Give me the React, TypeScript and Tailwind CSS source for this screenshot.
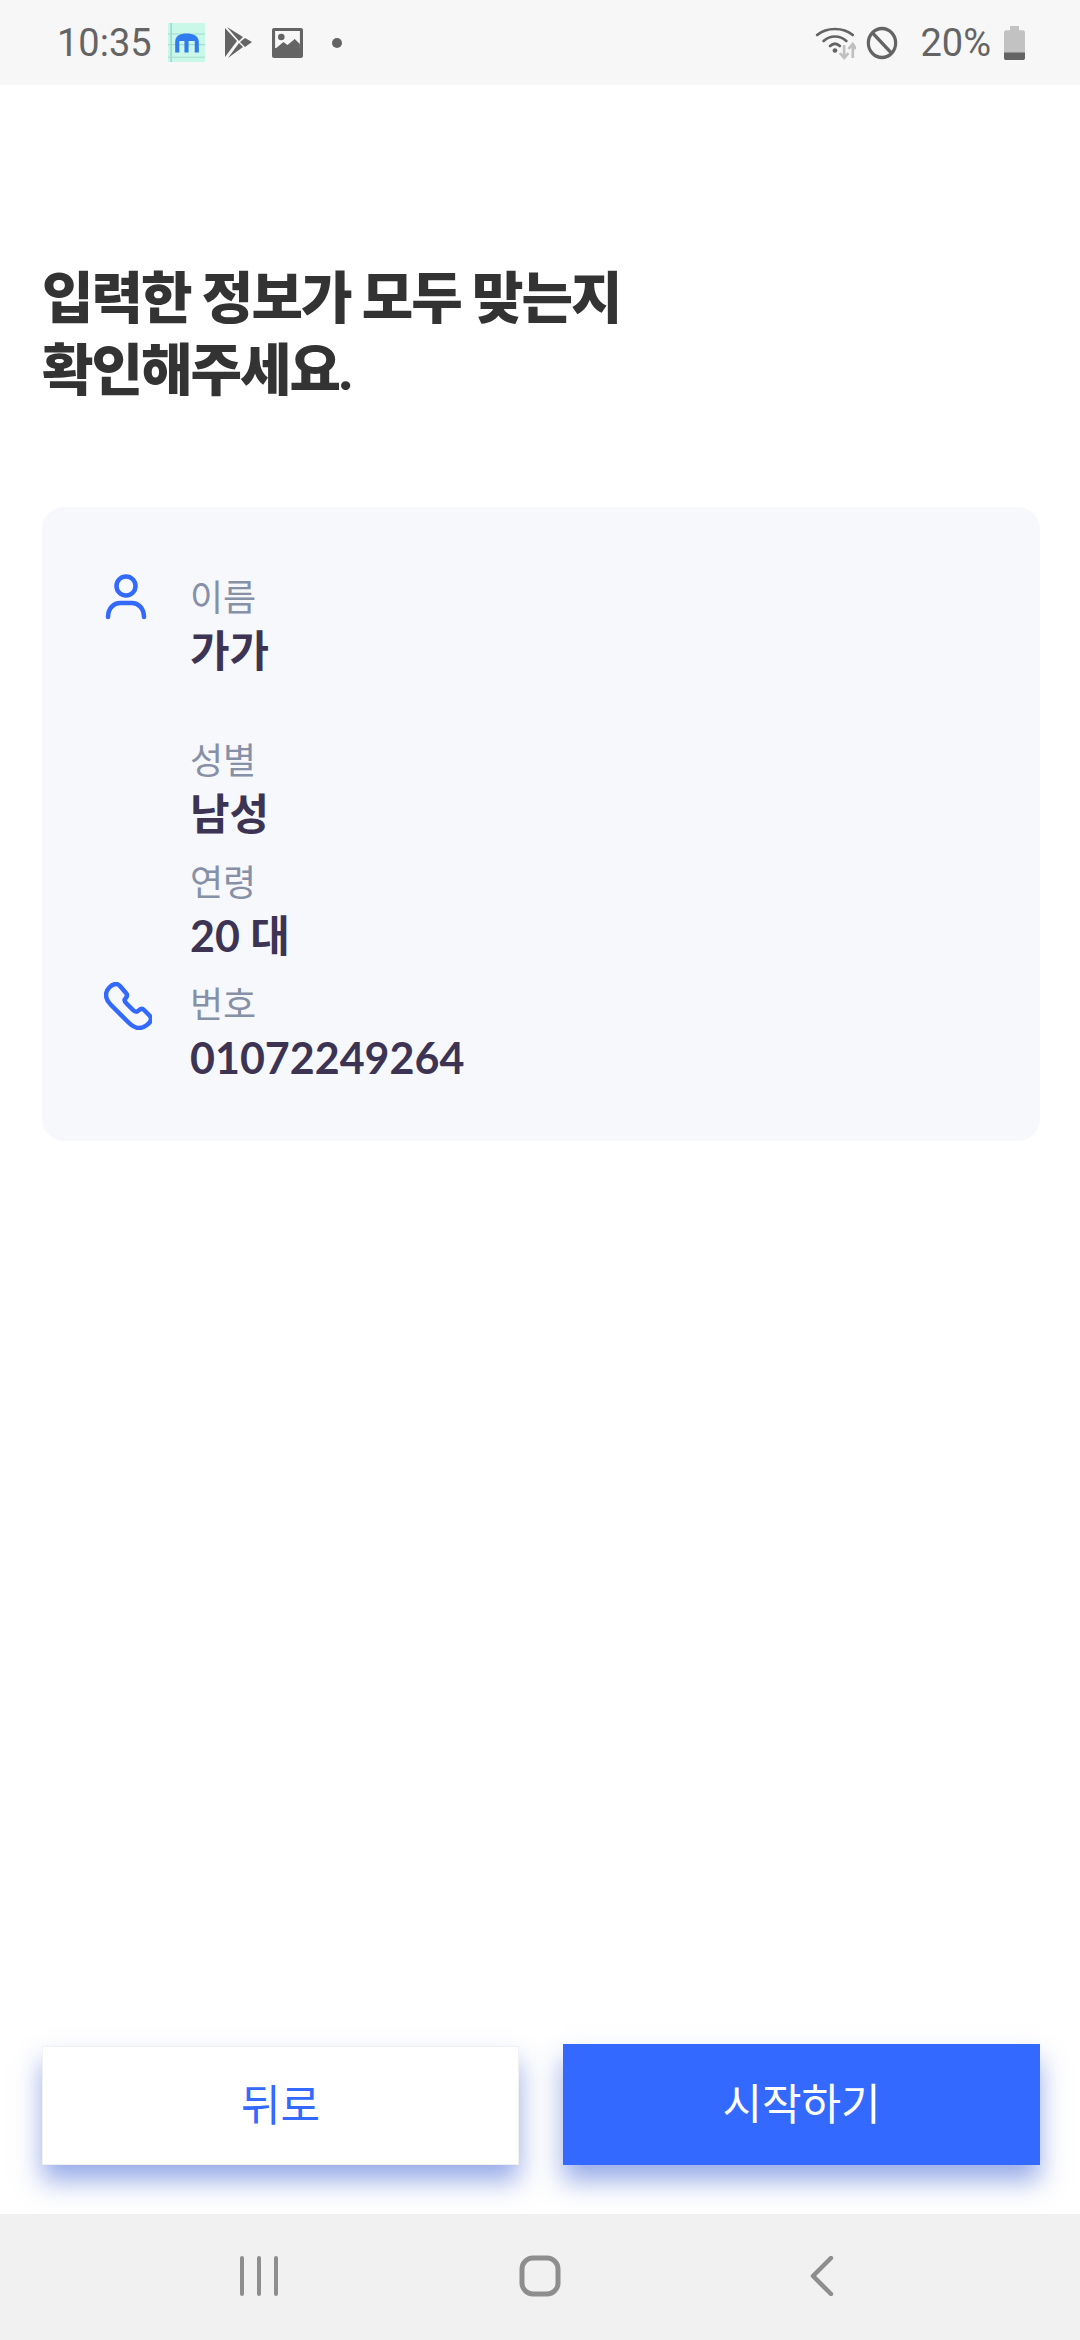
import React from "react";

const sans = "font-['Lato','Noto_Sans_CJK_KR',sans-serif]";

const StatusBar = () => (
  <div className="flex h-[85px] items-center justify-between bg-[#f7f7f7] pl-[57px] pr-[55px] text-[#646464]">
    <div className="flex items-center">
      <span className="font-['Roboto',sans-serif] text-[38px] leading-none">10:35</span>
      <svg width="37" height="39" viewBox="0 0 36 37" preserveAspectRatio="none" className="ml-[16px]">
        <rect width="36" height="37" fill="#c9f7e8" />
        <path d="M3 0V37" stroke="#7fc7cf" strokeWidth="1" />
        <path d="M0 10.5H36M0 20.5H36M0 32.5H36" stroke="#a5dccb" strokeWidth="1" />
        <path d="M7 28V18C7 12 12 10 18 10C24 10 30 12 30 18V28H26V17H20V28H16V17H11V28Z" fill="#2f7bf0" />
      </svg>
      <svg width="28" height="32" viewBox="0 0 28 32" className="ml-[19px]">
        <path d="M1 1L13 14L1 30Z M3 0L19 10L15 14Z M4 31L19 20L15 16Z M21 11L28 15L21 20L16 15Z" fill="#646464" />
      </svg>
      <svg width="31" height="30" viewBox="0 0 30 30" preserveAspectRatio="none" className="ml-[20px]">
        <rect width="30" height="30" rx="2" fill="#646464" />
        <rect x="3" y="3" width="24" height="17" fill="#f7f7f7" />
        <circle cx="9" cy="9" r="3.2" fill="#646464" />
        <path d="M3 21L11 14L15 17L22 11L27 16V24H3Z" fill="#646464" />
      </svg>
      <span className="ml-[29px] h-[10px] w-[10px] rounded-full bg-[#646464]" />
    </div>
    <div className="flex items-center">
      <svg width="41" height="34" viewBox="0 0 38 34" preserveAspectRatio="none">
        <path d="M2 9C11 1 26 1 35 9M8 15C14 9 23 9 29 15M14 20C17 17 20 17 23 20" fill="none" stroke="#646464" strokeWidth="2.6" strokeLinecap="round" />
        <circle cx="18.500" cy="24.500" r="2.200" fill="#646464" />
        <path d="M27 19V31M23 27L27 32L31 27" fill="none" stroke="#c0c0c0" strokeWidth="2.500" />
        <path d="M35 32V19M31 23L35 18L38 23" fill="none" stroke="#c0c0c0" strokeWidth="2.500" />
      </svg>
      <svg width="32" height="34" viewBox="0 0 34 34" preserveAspectRatio="none" className="ml-[10px]">
        <circle cx="17" cy="17" r="14.500" fill="none" stroke="#646464" strokeWidth="3.400" />
        <path d="M7 7L27 27" stroke="#646464" strokeWidth="3.400" />
      </svg>
      <span className="ml-[22px] font-['Roboto',sans-serif] text-[38px] leading-none">20%</span>
      <svg width="21" height="34" viewBox="0 0 21 32" preserveAspectRatio="none" className="ml-[13px]">
        <path d="M6 0H15V4H19C20 4 21 5 21 6V30C21 31 20 32 19 32H2C1 32 0 31 0 30V6C0 5 1 4 2 4H6Z" fill="#c2c2c2" />
        <path d="M0 25H21V30C21 31 20 32 19 32H2C1 32 0 31 0 30Z" fill="#646464" />
      </svg>
    </div>
  </div>
);

const Field = ({ label, value, icon, className = "" }: { label: string; value: string; icon?: React.ReactNode; className?: string }) => (
  <div className={`flex h-[122px] ${className}`}>
    <div className="flex w-[148px] justify-end pr-[43px] pt-[5px]">{icon}</div>
    <div className="flex flex-col">
      <span className="text-[36px] leading-[56px] text-[#8690a6]">{label}</span>
      <span className="text-[43px] font-bold leading-[52px] text-[#3d3454]">{value}</span>
    </div>
  </div>
);

const UserIcon = () => (
  <svg width="42" height="46" viewBox="0 0 42 46" fill="none" stroke="#3369ff" strokeWidth="4.5" strokeLinecap="round">
    <circle cx="21" cy="12" r="9.500" />
    <path d="M3 43C3 34 9 29 15 29H27C33 29 39 34 39 43" />
  </svg>
);

const PhoneIcon = () => (
  <svg width="48" height="48" viewBox="0 0 48 48" fill="none" stroke="#3369ff" strokeWidth="4.5" strokeLinejoin="round" className="mr-[-5px] mt-[1px]">
    <path d="M12 2C8 2 2 7 2 13C2 17 4 20 7 23L24 40C27 43 30 46 35 46C40 46 47 41 47 37C47 35 46 34 45 33L40 28C38 26 36 27 34 29C33 30 31 30 29 28L23 22C21 20 20 18 21 17C23 15 24 13 22 11L16 4C15 3 14 2 12 2Z" />
  </svg>
);

const App = () => {
  return (
    <div className={`flex h-[2340px] w-[1080px] flex-col overflow-hidden bg-white ${sans}`}>
      <StatusBar />

      <div className="flex flex-1 flex-col pl-[42px] pr-[40px]">
        <h1 className="mt-[176px] text-[56px] font-black leading-[72px] tracking-[-2px] text-[#333333]">
          입력한 정보가 모두 맞는지
          <br />
          확인해주세요.
        </h1>

        <div className="mt-[102px] flex h-[634px] flex-col rounded-[22px] bg-[#f7f8fc] pt-[62px]">
          <Field label="이름" value="가가" icon={<UserIcon />} className="mb-[41px]" />
          <Field label="성별" value="남성" />
          <Field label="연령" value="20 대" />
          <Field label="번호" value="01072249264" icon={<PhoneIcon />} />
        </div>

        <div className="mt-auto mb-[49px] flex items-end gap-[44px]">
          <button className="h-[119px] w-[477px] border border-[#f1f1f1] bg-white text-[43px] text-[#3369ff] shadow-[0_16px_24px_rgba(51,90,210,0.5)]">뒤로</button>
          <button className="h-[121px] w-[477px] bg-[#3369ff] text-[43px] text-white shadow-[0_16px_24px_rgba(51,90,210,0.5)]">시작하기</button>
        </div>
      </div>

      <div className="flex h-[126px] items-center bg-[#f1f1f1] pb-[2px] pl-[240px]">
        <div className="flex items-center gap-[241px]">
          <svg width="38" height="40" viewBox="0 0 38 40" stroke="#8e8e8e" strokeWidth="4" strokeLinecap="round">
            <path d="M2 2V38M19 2V38M36 2V38" />
          </svg>
          <svg width="42" height="42" viewBox="0 0 42 42" fill="none" stroke="#8e8e8e" strokeWidth="5">
            <rect x="3" y="3" width="36" height="36" rx="11" />
          </svg>
          <svg width="24" height="40" viewBox="0 0 24 40" fill="none" stroke="#8e8e8e" strokeWidth="4.500" strokeLinecap="round" strokeLinejoin="round" className="ml-[8px]">
            <path d="M21 2L3 20L21 38" />
          </svg>
        </div>
      </div>
    </div>
  );
};

export default App;
